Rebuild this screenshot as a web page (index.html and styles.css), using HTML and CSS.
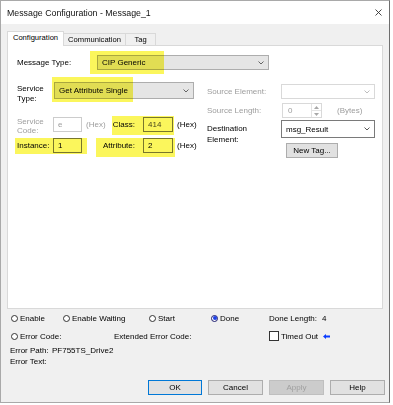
FILE: index.html
```html
<!DOCTYPE html>
<html>
<head>
<meta charset="utf-8">
<title>Message Configuration</title>
<link rel="stylesheet" href="styles.css">
</head>
<body>
<div class="window">
  <div class="titlebar">
    <span class="title">Message Configuration - Message_1</span>
    <svg class="close" width="7" height="7" viewBox="0 0 7 7"><path d="M0.5 0.5 L6.5 6.5 M6.5 0.5 L0.5 6.5" stroke="#333" stroke-width="0.9" fill="none"/></svg>
  </div>
  <div class="main">
    <div class="tabs">
      <div class="tab active">Configuration</div>
      <div class="tab t-comm">Communication</div>
      <div class="tab t-tag">Tag</div>
    </div>
    <div class="panel">
      <div class="row-type">
        <span class="lbl-type">Message Type:</span>
        <div class="select gray w-type"><span>CIP Generic</span><svg width="6" height="4" viewBox="0 0 6 4"><polyline points="0.5,0.5 3,3 5.5,0.5" fill="none" stroke="#555" stroke-width="0.9"/></svg></div>
      </div>
      <div class="cols">
        <div class="col-left">
          <div class="st-row">
            <span class="lbl2 lbl-st">Service<br>Type:</span>
            <div class="select gray w-st"><span>Get Attribute Single</span><svg width="6" height="4" viewBox="0 0 6 4"><polyline points="0.5,0.5 3,3 5.5,0.5" fill="none" stroke="#555" stroke-width="0.9"/></svg></div>
          </div>
          <div class="code-row">
            <span class="lbl-code dis">Service<br>Code:</span>
            <div class="input w-in1 disabled">e</div>
            <div class="mid"><span class="hex dis">(Hex)</span><span class="rlbl">Class:</span></div>
            <div class="input w-in2 dark">414</div>
            <span class="hex">(Hex)</span>
          </div>
          <div class="inst-row">
            <span class="lbl-inst">Instance:</span>
            <div class="input w-in1">1</div>
            <div class="mid end"><span class="rlbl">Attribute:</span></div>
            <div class="input w-in2">2</div>
            <span class="hex">(Hex)</span>
          </div>
        </div>
        <div class="col-right">
          <div class="se-row">
            <span class="lbl-r dis">Source Element:</span>
            <div class="select light w-r"><span></span><svg width="6" height="4" viewBox="0 0 6 4"><polyline points="0.5,0.5 3,3 5.5,0.5" fill="none" stroke="#b5b5b5" stroke-width="0.9"/></svg></div>
          </div>
          <div class="sl-row">
            <span class="lbl-sl dis">Source Length:</span>
            <div class="spin"><span class="spin-val">0</span><div class="spin-btns"><svg width="5" height="3" viewBox="0 0 5 3"><polygon points="0,3 2.5,0 5,3" fill="#a8a8a8"/></svg><span class="spin-div"></span><svg width="5" height="3" viewBox="0 0 5 3"><polygon points="0,0 2.5,3 5,0" fill="#a8a8a8"/></svg></div></div>
            <span class="bytes dis">(Bytes)</span>
          </div>
          <div class="de-row">
            <span class="lbl-de">Destination<br>Element:</span>
            <div class="select white w-r"><span>msg_Result</span><svg width="6" height="4" viewBox="0 0 6 4"><polyline points="0.5,0.5 3,3 5.5,0.5" fill="none" stroke="#444" stroke-width="0.9"/></svg></div>
          </div>
          <div class="nt-row">
            <div class="btn w-newtag">New Tag...</div>
          </div>
        </div>
      </div>
    </div>
    <div class="status">
      <div class="srow1">
        <div class="radio r-en"><span class="dot"></span><span>Enable</span></div>
        <div class="radio r-ew"><span class="dot"></span><span>Enable Waiting</span></div>
        <div class="radio r-st"><span class="dot"></span><span>Start</span></div>
        <div class="radio r-dn"><span class="dot on"><span class="inner"></span></span><span>Done</span></div>
        <div class="dlen"><span>Done Length:</span><span class="dlen-v">4</span></div>
      </div>
      <div class="srow2">
        <div class="radio r-ec"><span class="dot"></span><span>Error Code:</span></div>
        <div class="eec">Extended Error Code:</div>
        <div class="chk"><span class="box"></span><span>Timed Out</span><svg class="arrow" width="7" height="5" viewBox="0 0 7 5"><polygon points="0,2.5 3,0 3,1.5 7,1.5 7,3.5 3,3.5 3,5" fill="#0a3cff"/></svg></div>
      </div>
      <div class="srow3"><span class="ep-lbl">Error Path:</span><span>PF755TS_Drive2</span></div>
      <div class="srow4"><span>Error Text:</span></div>
    </div>
    <div class="buttons">
      <div class="btn default w-ok">OK</div>
      <div class="btn w-b">Cancel</div>
      <div class="btn disabledbtn w-b">Apply</div>
      <div class="btn w-b">Help</div>
    </div>
  </div>
  <div class="hl hl-1"></div>
  <div class="hl hl-2"></div>
  <div class="hl hl-3"></div>
  <div class="hl hl-4"></div>
  <div class="hl hl-5"></div>
</div>
</body>
</html>
```
FILE: styles.css
```css
* { box-sizing: border-box; }
html, body { margin: 0; padding: 0; background: #ffffff; }
body { font-family: "Liberation Sans", Arial, sans-serif; font-size: 8px; color: #000; }

.window {
  position: relative;
  width: 390px;
  height: 403px;
  border: 1px solid #a9a9a9;
  border-right-color: #6e6e6e;
  background: #f0f0f0;
  display: flex;
  flex-direction: column;
}
.titlebar {
  height: 23px;
  background: #fff;
  display: flex;
  align-items: center;
  justify-content: space-between;
  padding: 0 7px 0 6px;
  flex: none;
}
.title { font-size: 8.8px; color: #111; }
.close { display: block; }

.main { padding: 7px 0 0 6px; flex: 1; }
.tabs { display: flex; align-items: flex-end; height: 14px; }
.tab {
  height: 12px;
  border: 1px solid #d9d9d9;
  border-bottom: none;
  line-height: 11px;
  font-size: 7.6px;
  text-align: center;
  background: #f0f0f0;
  margin-left: -1px;
}
.tab.active {
  width: 57px;
  height: 15px;
  margin-left: 0;
  margin-bottom: -1px;
  line-height: 12px;
  background: #fff;
  position: relative;
  z-index: 1;
}
.t-comm { width: 63px; }
.t-tag { width: 31px; }

.panel {
  width: 376px;
  height: 264px;
  background: #fff;
  border: 1px solid #d9d9d9;
  padding: 9px 0 0 9px;
}
.row-type { display: flex; align-items: center; height: 15px; }
.lbl-type { width: 80px; }

.select {
  display: flex;
  align-items: center;
  justify-content: space-between;
  padding: 0 4px 0 4px;
  border: 1px solid #adadad;
}
.select svg { display: block; }
.select.gray { background: #e5e5e5; }
.select.light { background: #fff; border-color: #d9d9d9; }
.select.white { background: #fff; border-color: #7a7a7a; }
.w-type { width: 172px; height: 15px; }
.w-st { width: 140px; height: 17px; }
.w-r { width: 94px; }

.cols { display: flex; margin-top: 12px; }
.col-left { width: 190px; }
.col-right { padding-top: 2px; }

.st-row { display: flex; height: 17px; }
.lbl2 { line-height: 10px; }
.lbl-st { width: 37px; margin-top: 2px; }

.dis { color: #9d9d9d; }

.code-row { display: flex; align-items: center; height: 15px; margin-top: 18px; }
.lbl-code { width: 36px; line-height: 9px; align-self: flex-start; height: 18px; }
.inst-row { display: flex; align-items: center; height: 15px; margin-top: 6px; }
.lbl-inst { width: 36px; }

.input {
  height: 15px;
  border: 1px solid #7a7a7a;
  background: #fff;
  padding-left: 4px;
  line-height: 13px;
}
.input.disabled { border-color: #cccccc; color: #9d9d9d; }
.input.dark { color: #4a4a4a; }
.w-in1 { width: 29px; }
.w-in2 { width: 30px; }
.mid { width: 61px; display: flex; justify-content: space-between; padding: 0 8px 0 4px; }
.mid.end { justify-content: flex-end; }
.hex { padding-left: 4px; }
.mid .hex { padding-left: 0; }

.se-row { display: flex; align-items: center; height: 15px; }
.se-row .select { height: 15px; }
.lbl-r { width: 74px; }
.sl-row { display: flex; align-items: center; height: 15px; margin-top: 4px; }
.lbl-sl { width: 75px; }
.spin {
  width: 40px;
  height: 15px;
  border: 1px solid #d9d9d9;
  display: flex;
  justify-content: space-between;
  background: #fff;
}
.spin-val { color: #9d9d9d; padding-left: 5px; line-height: 13px; }
.spin-btns {
  width: 10px;
  border-left: 1px solid #e3e3e3;
  display: flex;
  flex-direction: column;
  align-items: center;
  justify-content: space-evenly;
}
.spin-btns svg { display: block; }
.spin-div { width: 9px; height: 1px; background: #e3e3e3; }
.bytes { margin-left: 15px; }

.de-row { display: flex; height: 18px; margin-top: 2px; }
.de-row .select { height: 18px; }
.lbl-de { width: 74px; line-height: 10.5px; padding-top: 4px; }
.nt-row { display: flex; margin-top: 5px; padding-left: 79px; }

.btn {
  height: 15px;
  border: 1px solid #adadad;
  background: #e1e1e1;
  display: flex;
  align-items: center;
  justify-content: center;
}
.btn.default { border-color: #0078d7; }
.btn.disabledbtn { background: #cccccc; border-color: #bfbfbf; color: #a0a0a0; }
.w-newtag { width: 52px; }

.status { padding-left: 4px; }
.srow1 { display: flex; align-items: center; height: 10px; margin-top: 4px; }
.srow2 { display: flex; align-items: center; height: 12px; margin-top: 7px; }
.radio { display: flex; align-items: center; gap: 2px; }
.dot {
  width: 7px;
  height: 7px;
  border-radius: 50%;
  border: 1px solid #333;
  background: #fff;
  display: flex;
  align-items: center;
  justify-content: center;
}
.dot.on { border-color: #1b1b6e; }
.inner { width: 4px; height: 4px; border-radius: 50%; background: #1d3fe6; }
.r-en { width: 52px; }
.r-ew { width: 86px; }
.r-st { width: 62px; }
.r-dn { width: 58px; }
.dlen-v { margin-left: 5px; }
.r-ec { width: 103px; }
.eec { width: 155px; }
.chk { display: flex; align-items: center; gap: 2px; }
.box { width: 10px; height: 10px; border: 1px solid #333; background: #fff; }
.arrow { display: block; margin-left: 3px; }
.srow3 { display: flex; align-items: center; height: 11px; margin-top: 3px; margin-left: -1px; }
.ep-lbl { width: 42px; }
.srow4 { display: flex; align-items: center; height: 11px; margin-left: -1px; }

.buttons { display: flex; justify-content: flex-end; gap: 6px; margin-top: 13px; padding-right: 4px; }
.w-ok { width: 54px; }
.w-b { width: 55px; }

.hl { position: absolute; background: #fbf65c; mix-blend-mode: multiply; }
.hl-1 { left: 89px; top: 50px; width: 74px; height: 23px; }
.hl-2 { left: 51px; top: 76px; width: 81px; height: 25px; }
.hl-3 { left: 111px; top: 115px; width: 62px; height: 19px; }
.hl-4 { left: 14px; top: 137px; width: 72px; height: 16px; }
.hl-5 { left: 95px; top: 137px; width: 79px; height: 19px; }
```
